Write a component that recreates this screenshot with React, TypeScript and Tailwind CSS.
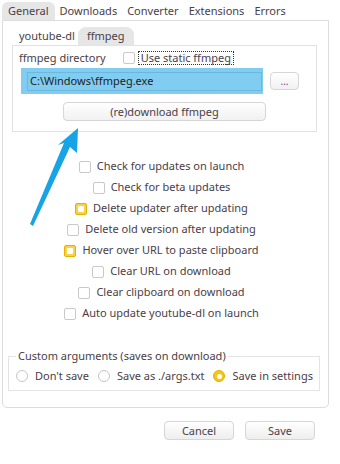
import React from 'react';

const font = { fontFamily: '"Noto Sans", "Open Sans", sans-serif' };

function Check({ checked, label }: { checked?: boolean; label: string }) {
  return (
    <div className="flex items-center h-[21px] gap-[6px]">
      {checked ? (
        <span className="w-[12px] h-[12px] rounded-[2px] border border-[#e3b300] bg-[#f7d24a] flex items-center justify-center">
          <span className="w-[6px] h-[6px] rounded-[1px] bg-white" />
        </span>
      ) : (
        <span className="w-[12px] h-[12px] rounded-[2px] border border-[#c9c9c9] bg-white" />
      )}
      <span>{label}</span>
    </div>
  );
}

function Radio({ checked, label }: { checked?: boolean; label: string }) {
  return (
    <div className="flex items-center gap-[7px] shrink-0 whitespace-nowrap">
      {checked ? (
        <span className="shrink-0 w-[12px] h-[12px] rounded-full bg-[#f5c518] border border-[#e0b000] flex items-center justify-center">
          <span className="w-[5px] h-[5px] rounded-full bg-white" />
        </span>
      ) : (
        <span className="shrink-0 w-[12px] h-[12px] rounded-full border border-[#c6c6c6] bg-white" />
      )}
      <span>{label}</span>
    </div>
  );
}

export default function App() {
  const options = [
    { label: 'Check for updates on launch' },
    { label: 'Check for beta updates' },
    { label: 'Delete updater after updating', checked: true },
    { label: 'Delete old version after updating' },
    { label: 'Hover over URL to paste clipboard', checked: true },
    { label: 'Clear URL on download' },
    { label: 'Clear clipboard on download' },
    { label: 'Auto update youtube-dl on launch' },
  ];

  return (
    <div className="relative w-[340px] h-[464px] bg-white text-[11px] text-[#4a4048]" style={font}>
      {/* Top tabs */}
      <div className="flex items-end h-[20px] pl-[2px] pt-[2px]">
        <div className="h-[18px] px-[6px] rounded-t-[6px] bg-[#e6e6e6] flex items-center">General</div>
        <div className="h-[18px] px-[5px] flex items-center">Downloads</div>
        <div className="h-[18px] px-[5px] flex items-center">Converter</div>
        <div className="h-[18px] px-[5px] flex items-center">Extensions</div>
        <div className="h-[18px] px-[5px] flex items-center">Errors</div>
      </div>

      {/* Main panel */}
      <div className="ml-[2px] w-[327px] h-[388px] border border-[#dddddd] rounded-b-[5px] flex flex-col">
        {/* Sub tabs */}
        <div className="flex items-end h-[24px] pl-[13px]">
          <div className="h-[18px] px-[3px] flex items-center">youtube-dl</div>
          <div className="h-[18px] px-[9px] rounded-t-[8px] bg-[#e6e6e6] flex items-center">ffmpeg</div>
        </div>

        {/* ffmpeg box */}
        <div className="ml-[9px] w-[305px] h-[87px] border border-[#e2e2e2] flex flex-col">
          <div className="flex items-center h-[22px] pt-[2px] pl-[6px]">
            <span>ffmpeg directory</span>
            <span className="ml-[17px] w-[12px] h-[12px] rounded-[2px] border border-[#c9c9c9] bg-white" />
            <span className="ml-[3px] px-[2px] border border-dotted border-[#333] leading-[12px]">Use static ffmpeg</span>
          </div>
          <div className="flex items-center">
            <div className="ml-[8px] w-[242px] h-[26px] bg-[#80cdf1] flex items-center pl-[6px] pr-[1px]">
              <div className="w-full h-[19px] border border-[#6ab8de] flex items-center pl-[2px] text-[#222]">
                C:\Windows\ffmpeg.exe
              </div>
            </div>
            <button className="ml-[7px] w-[29px] h-[18px] rounded-[4px] border border-[#d6d6d6] bg-gradient-to-b from-white to-[#f1f1f1] text-[#8a3d8a] text-[10px] leading-none">
              ...
            </button>
          </div>
          <div className="flex pl-[50px] pt-[8px]">
            <button className="w-[203px] h-[19px] rounded-[4px] border border-[#d6d6d6] bg-gradient-to-b from-white to-[#f1f1f1] leading-none">
              (re)download ffmpeg
            </button>
          </div>
        </div>

        {/* Options */}
        <div className="mt-[24px] flex flex-col items-center pr-[8px]">
          {options.map((o, i) => (
            <Check key={i} label={o.label} checked={o.checked} />
          ))}
        </div>

        {/* Custom arguments */}
        <fieldset className="mt-[25px] ml-[5px] w-[309px] h-[42px] border border-[#e4e4e4] px-[6px]">
          <legend className="px-[2px] ml-[1px] leading-[14px]">Custom arguments (saves on download)</legend>
          <div className="flex items-center gap-[9px] pt-[5px] pl-[1px]">
            <Radio label="Don't save" />
            <Radio label="Save as ./args.txt" />
            <Radio label="Save in settings" checked />
          </div>
        </fieldset>
      </div>

      {/* Buttons */}
      <div className="flex justify-end gap-[11px] pr-[25px] mt-[13px]">
        <button className="w-[70px] h-[19px] rounded-[4px] border border-[#d6d6d6] bg-gradient-to-b from-white to-[#eeeeee] leading-none">
          Cancel
        </button>
        <button className="w-[70px] h-[19px] rounded-[4px] border border-[#d6d6d6] bg-gradient-to-b from-white to-[#eeeeee] leading-none">
          Save
        </button>
      </div>

      {/* Annotation arrow */}
      <svg className="absolute left-0 top-0 pointer-events-none" width="340" height="464" viewBox="0 0 340 464">
        <polygon points="78,128 77,153 70,147 33,226 30,224 64,143 58,145" fill="#17a3e6" />
      </svg>
    </div>
  );
}
